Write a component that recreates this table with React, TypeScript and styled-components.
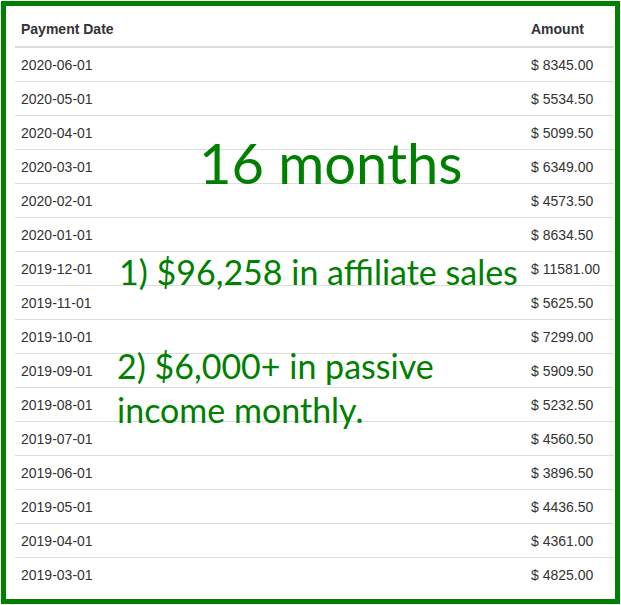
import React from "react";
import styled, { createGlobalStyle } from "styled-components";

const Global = createGlobalStyle`
  html, body { margin: 0; padding: 0; background: #ffffff; }
  body { font-family: "Liberation Sans", Arial, sans-serif; }
`;

const Frame = styled.div`
  box-sizing: border-box;
  width: 619px;
  height: 603px;
  margin: 1px 0 0 1px;
  border: 5px solid #008000;
  background: #ffffff;
  position: relative;
  padding: 0 1px 0 9px;
`;

const Table = styled.table`
  width: 599px;
  border-collapse: separate;
  border-spacing: 0;
  table-layout: fixed;
  font-family: "Liberation Sans", Arial, sans-serif;
  font-size: 14px;
  color: #333333;
`;

const HeadCell = styled.th`
  box-sizing: border-box;
  height: 42px;
  padding: 0 6px 7px;
  vertical-align: bottom;
  text-align: left;
  font-weight: bold;
  line-height: 20px;
  border-bottom: 2px solid #dddddd;
`;

const Cell = styled.td<{ $last?: boolean }>`
  box-sizing: border-box;
  height: ${(p) => (p.$last ? 33 : 34)}px;
  padding: 0 6px;
  vertical-align: middle;
  line-height: 20px;
  border-bottom: ${(p) => (p.$last ? "none" : "1px solid #dddddd")};
  white-space: nowrap;
`;

const Overlay = styled.div`
  position: absolute;
  inset: 0;
  pointer-events: none;
  font-family: Lato, "Open Sans", sans-serif;
  color: #008000;
  display: flex;
  flex-direction: column;
`;

const Title = styled.div`
  font-size: 56px;
  line-height: 56px;
  margin: 129px 0 0 193px;
`;

const Caption = styled.div<{ $top: number; $left: number }>`
  font-size: 34px;
  line-height: 44px;
  margin: ${(p) => p.$top}px 0 0 ${(p) => p.$left}px;
`;

const rows: [string, string][] = [
  ["2020-06-01", "8345.00"],
  ["2020-05-01", "5534.50"],
  ["2020-04-01", "5099.50"],
  ["2020-03-01", "6349.00"],
  ["2020-02-01", "4573.50"],
  ["2020-01-01", "8634.50"],
  ["2019-12-01", "11581.00"],
  ["2019-11-01", "5625.50"],
  ["2019-10-01", "7299.00"],
  ["2019-09-01", "5909.50"],
  ["2019-08-01", "5232.50"],
  ["2019-07-01", "4560.50"],
  ["2019-06-01", "3896.50"],
  ["2019-05-01", "4436.50"],
  ["2019-04-01", "4361.00"],
  ["2019-03-01", "4825.00"],
];

export default function App() {
  return (
    <>
      <Global />
      <Frame>
        <Table>
          <colgroup>
            <col style={{ width: 510 }} />
            <col style={{ width: 89 }} />
          </colgroup>
          <thead>
            <tr>
              <HeadCell>Payment Date</HeadCell>
              <HeadCell>Amount</HeadCell>
            </tr>
          </thead>
          <tbody>
            {rows.map(([d, a], i) => (
              <tr key={d}>
                <Cell $last={i === rows.length - 1}>{d}</Cell>
                <Cell $last={i === rows.length - 1}>$ {a}</Cell>
              </tr>
            ))}
          </tbody>
        </Table>
        <Overlay>
          <Title>16 months</Title>
          <Caption $top={59} $left={113}>1) $96,258 in affiliate sales</Caption>
          <Caption $top={50} $left={111}>
            2) $6,000+ in passive
            <br />
            income monthly.
          </Caption>
        </Overlay>
      </Frame>
    </>
  );
}
